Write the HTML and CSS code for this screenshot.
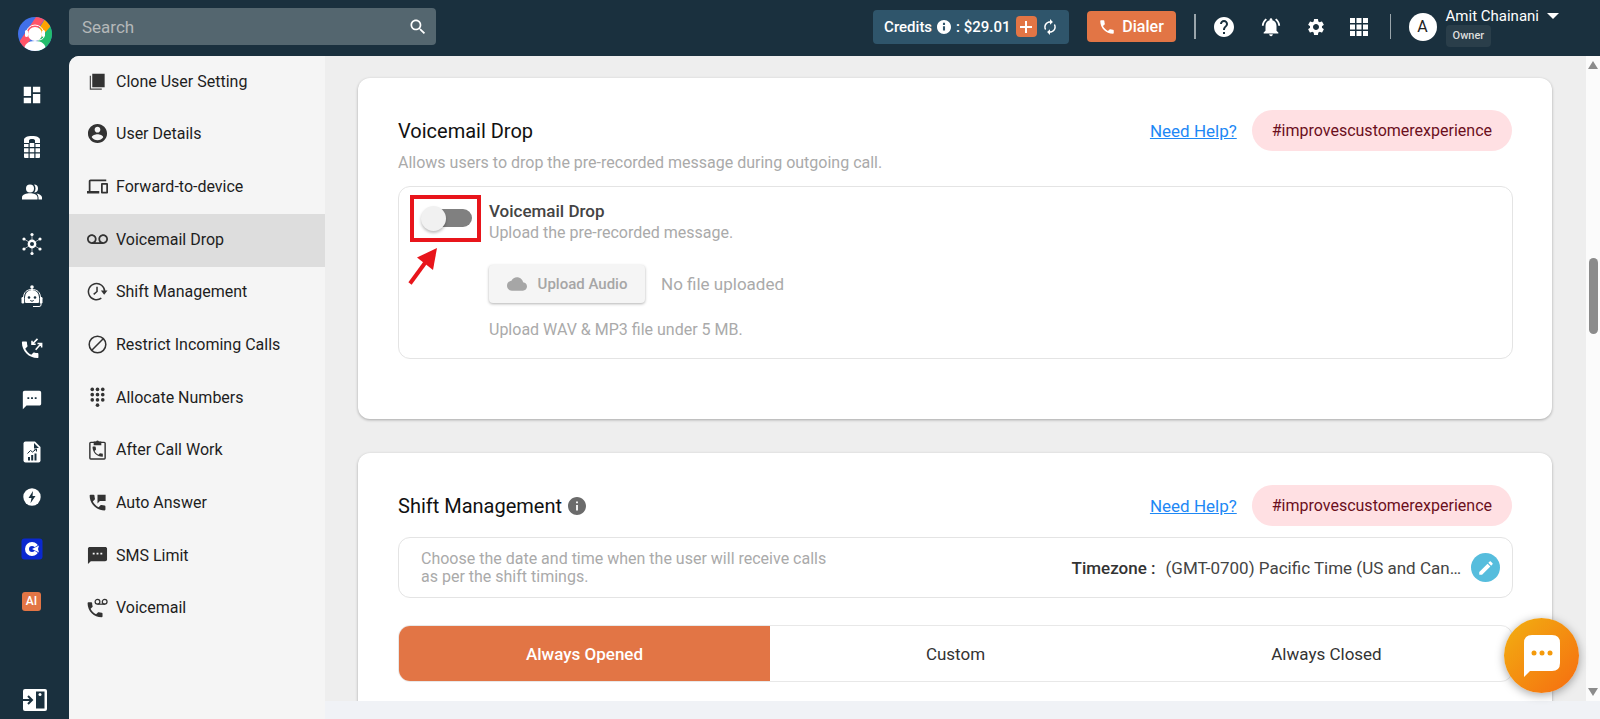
FILE: index.html
```html
<!DOCTYPE html>
<html lang="en">
<head>
  <meta charset="UTF-8">
  <meta name="viewport" content="width=device-width, initial-scale=1">
  <title>User Settings</title>
  <link rel="stylesheet" href="styles.css">
</head>
<body>
  <div class="app">
    <!-- left icon rail -->
    <nav class="rail" aria-label="Main">
      <a class="logo" href="#" aria-label="Home">
        <svg width="34" height="34" viewBox="0 0 34 34">
          <defs>
            <clipPath id="logoClip"><circle cx="17" cy="17" r="17"/></clipPath>
          </defs>
          <g clip-path="url(#logoClip)">
            <rect width="34" height="34" fill="#4170e8"/>
            <path d="M18 0h10L6 32 1 25z" fill="#ff5468"/>
            <path d="M27 2l6 7-13 15-2-8z" fill="#ffa400"/>
            <path d="M34 8v26H20l-1-9z" fill="#22bd6c"/>
            <path d="M8 17a9 9 0 0 1 18 0" fill="none" stroke="#fff" stroke-width="1"/>
            <circle cx="17" cy="17" r="7" fill="#fff"/>
            <rect x="7" y="13" width="3" height="7" rx="1.500" fill="#fff"/>
            <rect x="24" y="13" width="3" height="7" rx="1.500" fill="#fff"/>
            <path d="M6 34c0-7 4-10 11-10s11 3 11 10z" fill="#fff"/>
            <path d="M26 20c-1 2-3 3-6 3" fill="none" stroke="#fff" stroke-width="1"/>
          </g>
        </svg>
      </a>
      <ul class="rail-list">
        <li><a href="#" aria-label="Dashboard">
          <svg width="22" height="22" viewBox="0 0 24 24"><path d="M3 13h8V3H3v10zm0 8h8v-6H3v6zm10 0h8V11h-8v10zm0-18v6h8V3h-8z"/></svg>
        </a></li>
        <li><a href="#" aria-label="Calls">
          <svg width="18" height="22" viewBox="0 0 18 22"><path d="M1 7V4c0-2.500 3-4 8-4s8 1.500 8 4v3h-5V4.500c0-.8-1-1.500-3-1.500s-3 .7-3 1.500V7z"/><path d="M1 8h4.500v3H1zM6.700 7h4.600v4H6.700zM12.500 8H17v3h-4.500zM1 12.200h4.500v4H1zM6.700 12.200h4.600v4H6.700zM12.500 12.200H17v4h-4.500zM1 17.400h4.500V22H2q-1 0-1-1zM6.700 17.400h4.600V22H6.700zM12.500 17.400H17V21q0 1-1 1h-3.500z"/></svg>
        </a></li>
        <li class="tight"><a href="#" aria-label="Contacts">
          <svg width="20" height="16" viewBox="0 0 20 16"><path d="M12 0.500a4 4 0 1 1 0 8q1.500-1.500 1.500-4t-1.500-4zM14.500 9.500q5 1 5.500 3.700V15.500h-3.500v-2q-.2-2.500-2-4z"/><circle cx="8" cy="4.500" r="4"/><path d="M0 15.500v-2.300C0 10.500 4.500 9.200 8 9.200s7.500 1.300 7.500 4.300v2z"/></svg>
        </a></li>
        <li><a href="#" aria-label="Integrations">
          <svg width="22" height="24" viewBox="0 0 22 24"><circle cx="11" cy="12" r="3.200" fill="none" stroke="#fff" stroke-width="2.400"/><path d="M11 3v6M11 15v6M3 7l5 3M14 14l5 3M19 7l-5 3M8 14l-5 3" stroke="#fff" stroke-width="0.600"/><circle cx="11" cy="2.500" r="1.600"/><circle cx="11" cy="21.500" r="1.600"/><circle cx="3" cy="7" r="1.600"/><circle cx="19" cy="7" r="1.600"/><circle cx="3" cy="17" r="1.600"/><circle cx="19" cy="17" r="1.600"/></svg>
        </a></li>
        <li><a href="#" aria-label="Bot">
          <svg width="22" height="24" viewBox="0 0 22 24"><circle cx="11" cy="3" r="1.800"/><path d="M10.500 4h1v3h-1z"/><path d="M4 18v-5a7 7 0 0 1 14 0v5q0 1-1 1H5q-1 0-1-1z"/><path d="M2.500 14C2.500 8 6 5.500 11 5.500s8.500 2.500 8.500 8.500" fill="none" stroke="#fff" stroke-width="1"/><rect x="0.500" y="13" width="2.700" height="6.500" rx="1.200"/><rect x="18.800" y="13" width="2.700" height="6.500" rx="1.200"/><path d="M20 19v2q0 1.500-2 1.500h-6" fill="none" stroke="#fff" stroke-width="1"/><circle cx="8" cy="13.500" r="1.300" class="cut"/><circle cx="14" cy="13.500" r="1.300" class="cut"/><path d="M9.300 16.500q1.700 1.500 3.400 0" fill="none" class="cut-line"/></svg>
        </a></li>
        <li><a href="#" aria-label="Call routing">
          <svg width="22" height="22" viewBox="0 0 24 24"><path transform="translate(-2 2)" d="M6.620 10.790c1.440 2.830 3.760 5.140 6.590 6.590l2.200-2.200c.27-.27.67-.36 1.020-.24 1.120.37 2.330.57 3.570.57.55 0 1 .45 1 1V20c0 .55-.45 1-1 1-9.390 0-17-7.610-17-17 0-.55.45-1 1-1h3.500c.55 0 1 .45 1 1 0 1.250.2 2.450.57 3.570.11.35.03.74-.25 1.020z"/><path d="M18 2l-6 6M12 4v4h4M16 14l6-7M18 7h4.500v4.500" fill="none" stroke="#fff" stroke-width="1.700"/></svg>
        </a></li>
        <li><a href="#" aria-label="Messages">
          <svg width="22" height="22" viewBox="0 0 24 24"><path d="M20 2H4c-1.100 0-1.990.9-1.990 2L2 22l4-4h14c1.100 0 2-.9 2-2V4c0-1.100-.9-2-2-2zM9 11H7V9h2v2zm4 0h-2V9h2v2zm4 0h-2V9h2v2z"/></svg>
        </a></li>
        <li><a href="#" aria-label="Reports">
          <svg width="18" height="22" viewBox="0 0 18 22"><path d="M2.500 0.500H12L17.500 6v13.500q0 2-2 2h-13q-2 0-2-2v-17q0-2 2-2z"/><path class="cut" d="M11 2l5 5h-5zM5 16h2v3.500H5zM8.200 14h2v5.500h-2zM11.500 12.500h2v7h-2z"/><path d="M4.500 12.500l3-3 2 1.500 4-3M11 8h2.500v2.500" fill="none" class="cut-line"/></svg>
        </a></li>
        <li class="tight"><a href="#" aria-label="Power">
          <svg width="18" height="18" viewBox="0 0 18 18"><circle cx="9" cy="9" r="8.700"/><path class="cut" d="M10 3L5.500 10h3L7.500 15.200 12.500 8H9.500z"/></svg>
        </a></li>
        <li><a href="#" aria-label="Campaigns">
          <svg width="22" height="22" viewBox="0 0 22 22"><rect x="0.500" y="0.500" width="21" height="21" rx="3" fill="#0a28d0"/><circle cx="11" cy="11" r="5" fill="none" stroke="#fff" stroke-width="4"/><path d="M11 11l9-6v12z" fill="#0a28d0"/><path d="M11 11l7-3.500-1 3.500 1 3.500z" fill="#fff"/></svg>
        </a></li>
        <li><a class="ai" href="#">AI</a></li>
      </ul>
      <button class="rail-toggle" aria-label="Expand menu">
        <svg width="24" height="22" viewBox="0 0 24 22"><rect width="24" height="22" rx="2" fill="#fff"/><path d="M0 11h8M5 7l4 4-4 4" fill="none" class="cut-line wide"/><rect class="cut" x="13" y="2.500" width="8.500" height="17"/><circle cx="17" cy="5.500" r="1.500" fill="#fff"/></svg>
      </button>
    </nav>

    <div class="main">
      <header class="topbar">
        <form class="search">
          <input type="text" placeholder="Search" aria-label="Search">
          <button type="button" aria-label="Search">
            <svg width="20" height="20" viewBox="0 0 24 24"><path d="M15.500 14h-.79l-.28-.27C15.410 12.590 16 11.110 16 9.500 16 5.910 13.090 3 9.500 3S3 5.910 3 9.500 5.910 16 9.500 16c1.610 0 3.090-.59 4.230-1.570l.27.28v.79l5 4.990L20.490 19l-4.990-5zm-6 0C7.010 14 5 11.990 5 9.500S7.010 5 9.500 5 14 7.010 14 9.500 11.990 14 9.500 14z"/></svg>
          </button>
        </form>

        <div class="credits">
          <span>Credits</span>
          <svg width="14" height="14" viewBox="2 2 20 20"><path d="M12 2C6.480 2 2 6.480 2 12s4.480 10 10 10 10-4.480 10-10S17.520 2 12 2zm1.500 15h-3v-6h3v6zm0-8h-3V6h3v3z"/></svg>
          <span>: $29.01</span>
          <button class="add" aria-label="Add credits">
            <svg width="14" height="14" viewBox="0 0 14 14"><path d="M7 1v12M1 7h12" stroke="#fff" stroke-width="2"/></svg>
          </button>
          <button class="refresh" aria-label="Refresh credits">
            <svg width="16" height="16" viewBox="2 1 20 22"><path d="M12 6v3l4-4-4-4v3c-4.420 0-8 3.580-8 8 0 1.570.46 3.030 1.240 4.260L6.700 14.800c-.45-.83-.7-1.790-.7-2.800 0-3.310 2.690-6 6-6zm6.760 1.740L17.300 9.200c.44.84.7 1.790.7 2.800 0 3.310-2.690 6-6 6v-3l-4 4 4 4v-3c4.420 0 8-3.580 8-8 0-1.570-.46-3.030-1.240-4.260z"/></svg>
          </button>
        </div>
        <button class="dialer">
          <svg width="18" height="18" viewBox="0 0 24 24"><path d="M6.620 10.790c1.440 2.830 3.760 5.140 6.590 6.590l2.200-2.200c.27-.27.67-.36 1.020-.24 1.120.37 2.330.57 3.570.57.55 0 1 .45 1 1V20c0 .55-.45 1-1 1-9.390 0-17-7.610-17-17 0-.55.45-1 1-1h3.500c.55 0 1 .45 1 1 0 1.250.2 2.450.57 3.570.11.35.03.74-.25 1.020z"/></svg>
          Dialer
        </button>

        <div class="tools">
          <button aria-label="Help">
            <svg width="24" height="24" viewBox="0 0 24 24"><path d="M12 2C6.480 2 2 6.480 2 12s4.480 10 10 10 10-4.480 10-10S17.520 2 12 2zm1 17h-2v-2h2v2zm2.070-7.750l-.9.920C13.450 12.900 13 13.500 13 15h-2v-.5c0-1.100.45-2.100 1.170-2.830l1.240-1.260c.37-.36.59-.86.59-1.410 0-1.100-.9-2-2-2s-2 .9-2 2H8c0-2.210 1.790-4 4-4s4 1.790 4 4c0 .88-.36 1.680-.93 2.250z"/></svg>
          </button>
          <button aria-label="Notifications">
            <svg width="22" height="22" viewBox="0 0 24 24"><path d="M7.580 4.080L6.150 2.650C3.750 4.480 2.170 7.300 2.030 10.500h2c.15-2.650 1.510-4.970 3.550-6.420zm12.390 6.420h2c-.15-3.200-1.730-6.020-4.120-7.850l-1.420 1.430c2.020 1.450 3.390 3.770 3.540 6.420zM18 11c0-3.070-1.640-5.640-4.500-6.320V4c0-.83-.67-1.500-1.500-1.500s-1.500.67-1.500 1.500v.68C7.630 5.360 6 7.920 6 11v5l-2 2v1h16v-1l-2-2v-5zm-6 11c.14 0 .27-.01.4-.04.65-.14 1.180-.58 1.440-1.180.1-.24.15-.5.15-.78h-4c.01 1.100.9 2 2.010 2z"/></svg>
          </button>
          <button aria-label="Settings">
            <svg width="20" height="20" viewBox="0 0 24 24"><path d="M19.140 12.940c.04-.3.06-.61.06-.94 0-.32-.02-.64-.07-.94l2.030-1.580c.18-.14.23-.41.12-.61l-1.920-3.320c-.12-.22-.37-.29-.59-.22l-2.390.96c-.5-.38-1.030-.7-1.620-.94l-.36-2.540c-.04-.24-.24-.41-.48-.41h-3.840c-.24 0-.43.17-.47.41l-.36 2.540c-.59.24-1.130.57-1.620.94l-2.390-.96c-.22-.08-.47 0-.59.22L2.740 8.870c-.12.21-.08.47.12.61l2.030 1.580c-.05.3-.09.63-.09.94s.02.64.07.94l-2.030 1.580c-.18.14-.23.41-.12.61l1.920 3.320c.12.22.37.29.59.22l2.390-.96c.5.38 1.030.7 1.620.94l.36 2.540c.05.24.24.41.48.41h3.840c.24 0 .44-.17.47-.41l.36-2.540c.59-.24 1.130-.56 1.620-.94l2.390.96c.22.08.47 0 .59-.22l1.920-3.320c.12-.22.07-.47-.12-.61l-2.010-1.580zM12 15.600c-1.980 0-3.600-1.620-3.600-3.600s1.620-3.600 3.600-3.600 3.600 1.620 3.600 3.600-1.620 3.600-3.600 3.600z"/></svg>
          </button>
          <button aria-label="Apps">
            <svg width="18" height="18" viewBox="0 0 18 18"><path d="M0 0h5v5H0zM6.500 0h5v5h-5zM13 0h5v5h-5zM0 6.500h5v5H0zM6.500 6.500h5v5h-5zM13 6.500h5v5h-5zM0 13h5v5H0zM6.500 13h5v5h-5zM13 13h5v5h-5z"/></svg>
          </button>
        </div>

        <div class="account">
          <span class="avatar">A</span>
          <div class="who">
            <button class="name">Amit Chainani
              <svg width="12" height="6" viewBox="0 0 12 6"><path d="M0 0h12L6 6z"/></svg>
            </button>
            <span class="role">Owner</span>
          </div>
        </div>
      </header>

      <div class="workspace">
        <aside class="menu">
          <a href="#">
            <svg viewBox="0 0 22 22"><path d="M5.500 3h13v14h-13z"/><path d="M3.500 5v14h12" fill="none" stroke="#444" stroke-width="1.200"/></svg>
            Clone User Setting</a>
          <a href="#">
            <svg viewBox="1 1 22 22"><path d="M12 2C6.480 2 2 6.480 2 12s4.480 10 10 10 10-4.480 10-10S17.520 2 12 2zm0 3c1.660 0 3 1.340 3 3s-1.340 3-3 3-3-1.340-3-3 1.340-3 3-3zm0 14.200c-2.500 0-4.710-1.280-6-3.220.03-1.990 4-3.080 6-3.080 1.990 0 5.970 1.090 6 3.080-1.290 1.940-3.500 3.220-6 3.220z"/></svg>
            User Details</a>
          <a href="#">
            <svg viewBox="0 0 24 24"><path d="M4 6h18V4H4c-1.100 0-2 .9-2 2v11H0v3h14v-3H4V6zm19 2h-6c-.55 0-1 .45-1 1v10c0 .55.45 1 1 1h6c.55 0 1-.45 1-1V9c0-.55-.45-1-1-1zm-1 10h-4v-8h4v8z"/></svg>
            Forward-to-device</a>
          <a class="active" href="#">
            <svg viewBox="0 0 24 24"><path d="M18.500 6C15.460 6 13 8.460 13 11.500c0 1.330.47 2.550 1.260 3.500H9.740c.79-.95 1.260-2.170 1.260-3.500C11 8.460 8.540 6 5.500 6S0 8.460 0 11.500 2.460 17 5.500 17h13c3.040 0 5.500-2.460 5.500-5.500S21.540 6 18.500 6zm-13 9C3.570 15 2 13.430 2 11.500S3.570 8 5.500 8 9 9.570 9 11.500 7.430 15 5.500 15zm13 0c-1.930 0-3.500-1.570-3.500-3.500S16.570 8 18.500 8 22 9.570 22 11.500 20.430 15 18.500 15z"/></svg>
            Voicemail Drop</a>
          <a href="#">
            <svg viewBox="0 0 22 22"><path d="M18.500 11a8.500 8.500 0 1 0-3.500 7M10.500 6v5L7 14" fill="none" stroke="#333" stroke-width="1.600"/><path d="M14.500 10h7L18 14.500z"/></svg>
            Shift Management</a>
          <a href="#">
            <svg viewBox="0 0 22 22"><circle cx="11" cy="11" r="8.700" fill="none" stroke="#333" stroke-width="1.600"/><path d="M17 5L5 17" stroke="#333" stroke-width="1.600"/></svg>
            Restrict Incoming Calls</a>
          <a href="#">
            <svg viewBox="0 0 22 22"><circle cx="5.500" cy="2.500" r="1.900"/><circle cx="11" cy="2.500" r="1.900"/><circle cx="16.500" cy="2.500" r="1.900"/><circle cx="5.500" cy="8" r="1.900"/><circle cx="11" cy="8" r="1.900"/><circle cx="16.500" cy="8" r="1.900"/><circle cx="5.500" cy="13.500" r="1.900"/><circle cx="11" cy="13.500" r="1.900"/><circle cx="16.500" cy="13.500" r="1.900"/><circle cx="11" cy="19" r="1.900"/></svg>
            Allocate Numbers</a>
          <a href="#">
            <svg viewBox="0 0 22 22"><rect x="3" y="3.500" width="16" height="17.500" rx="1" fill="none" stroke="#333" stroke-width="1.500"/><path d="M7 2.500h2.500a1.700 1.700 0 0 1 3 0H15v4H7z"/><g transform="translate(4 6) scale(0.600)"><path d="M6.620 10.790c1.440 2.830 3.760 5.140 6.590 6.590l2.200-2.200c.27-.27.67-.36 1.020-.24 1.120.37 2.330.57 3.570.57.55 0 1 .45 1 1V20c0 .55-.45 1-1 1-9.390 0-17-7.610-17-17 0-.55.45-1 1-1h3.500c.55 0 1 .45 1 1 0 1.250.2 2.450.57 3.570.11.35.03.74-.25 1.020z"/></g></svg>
            After Call Work</a>
          <a href="#">
            <svg viewBox="1 1 22 22"><path transform="translate(1 1) scale(0.920)" d="M6.620 10.790c1.440 2.830 3.760 5.140 6.590 6.590l2.200-2.200c.27-.27.67-.36 1.020-.24 1.120.37 2.330.57 3.570.57.55 0 1 .45 1 1V20c0 .55-.45 1-1 1-9.390 0-17-7.610-17-17 0-.55.45-1 1-1h3.500c.55 0 1 .45 1 1 0 1.250.2 2.450.57 3.570.11.35.03.74-.25 1.020z"/><path d="M12 4h8.500v6.500h-6L12 13z"/></svg>
            Auto Answer</a>
          <a href="#">
            <svg viewBox="1 1 22 22"><path d="M20 3H4c-1.100 0-1.990.7-1.990 1.500L2 21l3-3h15c1.100 0 2-.7 2-1.500v-12C22 3.700 21.100 3 20 3zM9 11H7V9h2v2zm4 0h-2V9h2v2zm4 0h-2V9h2v2z"/></svg>
            SMS Limit</a>
          <a href="#">
            <svg viewBox="0 0 22 22"><path transform="translate(-2 3) scale(0.870)" d="M6.620 10.790c1.440 2.830 3.760 5.140 6.590 6.590l2.200-2.200c.27-.27.67-.36 1.020-.24 1.120.37 2.330.57 3.570.57.55 0 1 .45 1 1V20c0 .55-.45 1-1 1-9.390 0-17-7.610-17-17 0-.55.45-1 1-1h3.500c.55 0 1 .45 1 1 0 1.250.2 2.450.57 3.570.11.35.03.74-.25 1.020z"/><path d="M11 7.500h8" stroke="#333" stroke-width="1.300"/><circle cx="11" cy="5" r="2.500" fill="none" stroke="#333" stroke-width="1.300"/><circle cx="18.500" cy="5" r="2.500" fill="none" stroke="#333" stroke-width="1.300"/></svg>
            Voicemail</a>
        </aside>

        <div class="page">
          <div class="scroller">
            <main class="content">
              <section class="card">
                <div class="card-head">
                  <h2>Voicemail Drop</h2>
                  <a class="help" href="#">Need Help?</a>
                  <span class="tag">#improvescustomerexperience</span>
                </div>
                <p class="note">Allows users to drop the pre-recorded message during outgoing call.</p>
                <div class="box drop-box">
                  <div class="switch-col">
                    <label class="switch">
                      <input type="checkbox" aria-label="Enable Voicemail Drop">
                      <span class="track"></span>
                    </label>
                    <svg class="arrow" width="30" height="38" viewBox="0 0 30 38"><path d="M2 36.500L17 16" stroke="#e8151b" stroke-width="4"/><path d="M29 1L9 10.500 25 23z" fill="#e8151b"/></svg>
                  </div>
                  <div class="drop-info">
                    <h3>Voicemail Drop</h3>
                    <p>Upload the pre-recorded message.</p>
                    <div class="upload">
                      <button disabled>
                        <svg width="20" height="20" viewBox="0 0 24 24"><path d="M19.350 10.040C18.670 6.590 15.640 4 12 4 9.110 4 6.600 5.640 5.350 8.040 2.340 8.360 0 10.910 0 14c0 3.310 2.690 6 6 6h13c2.760 0 5-2.240 5-5 0-2.640-2.050-4.780-4.650-4.960z"/></svg>
                        Upload Audio
                      </button>
                      <span>No file uploaded</span>
                    </div>
                    <p>Upload WAV &amp; MP3 file under 5 MB.</p>
                  </div>
                </div>
              </section>

              <section class="card">
                <div class="card-head">
                  <h2>Shift Management
                    <svg width="18" height="18" viewBox="2 2 20 20"><path d="M12 2C6.480 2 2 6.480 2 12s4.480 10 10 10 10-4.480 10-10S17.520 2 12 2zm1 15h-2v-6h2v6zm0-8h-2V7h2v2z"/></svg>
                  </h2>
                  <a class="help" href="#">Need Help?</a>
                  <span class="tag">#improvescustomerexperience</span>
                </div>
                <div class="box zone-box">
                  <p>Choose the date and time when the user will receive calls<br>as per the shift timings.</p>
                  <b>Timezone :</b>
                  <span>(GMT-0700) Pacific Time (US and Can…</span>
                  <button class="edit" aria-label="Edit timezone">
                    <svg width="18" height="18" viewBox="0 0 24 24"><path d="M3 17.250V21h3.750L17.810 9.940l-3.750-3.750L3 17.250zM20.710 7.040c.39-.39.39-1.020 0-1.410l-2.340-2.340c-.39-.39-1.020-.39-1.410 0l-1.830 1.830 3.750 3.750 1.830-1.830z"/></svg>
                  </button>
                </div>
                <div class="tabs">
                  <button class="on">Always Opened</button>
                  <button>Custom</button>
                  <button>Always Closed</button>
                </div>
              </section>
            </main>
            <div class="scrollbar" aria-hidden="true">
              <svg width="10" height="8" viewBox="0 0 10 8"><path d="M5 0l5 8H0z"/></svg>
              <div class="thumb"></div>
              <svg width="10" height="8" viewBox="0 0 10 8"><path d="M0 0h10L5 8z"/></svg>
            </div>
          </div>
          <div class="footer"></div>
        </div>
      </div>
    </div>
  </div>

  <button class="chat" aria-label="Open chat">
    <svg width="36" height="42" viewBox="0 0 36 42"><path d="M8 0h20q8 0 8 8v20q0 8-8 8H6l-6 6V8q0-8 8-8z" fill="#fff"/><circle cx="10" cy="18" r="2.500" fill="#f49a0b"/><circle cx="18" cy="18" r="2.500" fill="#f49a0b"/><circle cx="26" cy="18" r="2.500" fill="#f49a0b"/></svg>
  </button>
</body>
</html>
```
FILE: styles.css
```css
* {
  box-sizing: border-box;
}

body {
  margin: 0;
  font-family: Roboto, sans-serif;
  font-size: 16px;
  color: #222;
  background: #1a303e;
}

h2, h3, p, ul {
  margin: 0;
  padding: 0;
  font-weight: normal;
}

button {
  font-family: inherit;
  border: none;
  background: none;
  padding: 0;
  color: inherit;
  cursor: pointer;
}

svg {
  display: block;
  flex: none;
}

.app {
  display: flex;
  height: 100vh;
  overflow: hidden;
}

/* icon rail */
.rail {
  width: 69px;
  flex: none;
  display: flex;
  flex-direction: column;
  padding: 17px 0 8px;
  fill: #fff;
}

.logo {
  margin-left: 18px;
}

.rail-list {
  list-style: none;
  margin-top: 18px;
}

.rail-list li {
  height: 52px;
  width: 63px;
  display: flex;
  align-items: center;
  justify-content: center;
}

.rail-list .tight {
  margin-top: -7px;
}

.cut {
  fill: #1a303e;
}

.cut-line {
  stroke: #1a303e;
  stroke-width: 1;
}

.cut-line.wide {
  stroke-width: 2;
}

.ai {
  display: block;
  width: 19px;
  height: 19px;
  border-radius: 3px;
  background: #e27545;
  color: #fff;
  font-size: 12px;
  font-weight: 500;
  line-height: 19px;
  text-align: center;
  text-decoration: none;
}

.rail-toggle {
  margin: auto 0 0 23px;
  width: 24px;
}

/* top bar */
.main {
  flex: 1;
  min-width: 0;
  display: flex;
  flex-direction: column;
}

.topbar {
  height: 56px;
  flex: none;
  display: flex;
  align-items: center;
  padding: 0 41px 3px 0;
  color: #fff;
  fill: #fff;
}

.search {
  display: flex;
  align-items: center;
  width: 367px;
  height: 37px;
  margin-right: auto;
  padding: 0 8px 0 12px;
  border-radius: 4px;
  background: #54666f;
}

.search input {
  flex: 1;
  min-width: 0;
  padding: 0 1px;
  border: none;
  outline: none;
  background: none;
  color: #fff;
  font-family: inherit;
  font-size: 17px;
}

.search input::placeholder {
  color: #b4b8b9;
}

.credits {
  display: flex;
  align-items: center;
  gap: 5px;
  height: 34px;
  padding: 0 11px;
  margin-right: 18px;
  border-radius: 4px;
  background: #2f556b;
  font-size: 15px;
  font-weight: 500;
}

.add {
  display: flex;
  align-items: center;
  justify-content: center;
  width: 21px;
  height: 21px;
  border-radius: 4px;
  background: #e27545;
}

.dialer {
  display: flex;
  align-items: center;
  justify-content: center;
  gap: 6px;
  width: 89px;
  height: 31px;
  border-radius: 4px;
  background: #e27545;
  font-size: 16px;
  font-weight: 500;
}

.tools {
  display: flex;
  align-items: center;
  gap: 24px;
  height: 25px;
  margin-left: 18px;
  padding: 0 22px 0 16px;
  border-left: 2px solid #9aa5ab;
  border-right: 1px solid #9aa5ab;
}

.account {
  display: flex;
  align-items: center;
  gap: 9px;
  padding-left: 18px;
}

.avatar {
  width: 28px;
  height: 28px;
  border-radius: 50%;
  background: #fff;
  color: #222;
  line-height: 28px;
  text-align: center;
}

.who {
  display: flex;
  flex-direction: column;
  align-items: flex-start;
}

.name {
  display: flex;
  align-items: center;
  gap: 8px;
  height: 18px;
  font-size: 15px;
}

.role {
  padding: 0 7px;
  border-radius: 4px;
  background: #2a3e4a;
  color: #ddd;
  font-size: 11px;
  font-weight: 500;
  line-height: 22px;
}

/* settings menu */
.workspace {
  flex: 1;
  min-height: 0;
  display: flex;
  border-top-left-radius: 10px;
  overflow: hidden;
  background: #eee;
}

.menu {
  width: 256px;
  flex: none;
  display: grid;
  grid-auto-rows: 1fr;
  padding-bottom: 84px;
  background: #f5f5f5;
}

.menu a {
  display: flex;
  align-items: center;
  gap: 8px;
  padding: 0 0 2px 18px;
  color: #1e1e1e;
  text-decoration: none;
}

.menu svg {
  width: 21px;
  height: 21px;
  fill: #333;
}

.menu .active {
  background: #ddd;
}

/* page */
.page {
  flex: 1;
  min-width: 0;
  display: flex;
  flex-direction: column;
}

.scroller {
  flex: 1;
  min-height: 0;
  display: flex;
  overflow: hidden;
}

.content {
  flex: 1;
  min-width: 0;
  padding: 22px 34px 22px 33px;
}

.footer {
  height: 18px;
  background: #f0f2f6;
}

.scrollbar {
  width: 14px;
  display: flex;
  flex-direction: column;
  align-items: center;
  justify-content: space-between;
  padding: 5px 0;
  background: #fbfbfb;
  fill: #8b8b8b;
}

.thumb {
  width: 9px;
  height: 76px;
  margin: 189px 0 auto;
  border-radius: 5px;
  background: #8b8b8b;
}

.card {
  margin-bottom: 34px;
  padding: 32px 39px 60px 40px;
  border-radius: 12px;
  background: #fff;
  box-shadow: 0 1px 3px rgba(0, 0, 0, 0.3);
}

.card-head {
  display: flex;
  align-items: center;
  height: 41px;
  padding-right: 1px;
}

.card-head h2 {
  display: flex;
  align-items: center;
  gap: 6px;
  margin-right: auto;
  color: #111;
  font-size: 20px;
}

.card-head h2 svg {
  fill: #6b6b6b;
}

.help {
  margin-right: 15px;
  color: #1e88f5;
  font-size: 17px;
}

.tag {
  padding: 0 20px;
  border-radius: 21px;
  background: #ffe0e3;
  color: #6b0f1d;
  font-size: 16px;
  line-height: 41px;
}

.note {
  margin: 2px 0 13px;
  color: #aaa;
  font-size: 16px;
  line-height: 20px;
}

.box {
  border: 1px solid #e4e4e4;
  border-radius: 12px;
}

.drop-box {
  display: flex;
  gap: 8px;
  padding: 8px 11px 18px;
}

.switch {
  display: block;
  width: 71px;
  height: 47px;
  border: 4px solid #e8151b;
  padding: 10px 5px 0 8px;
}

.switch input {
  position: absolute;
  opacity: 0;
}

.track {
  display: flex;
  align-items: center;
  height: 18px;
  border-radius: 9px;
  margin-left: 5px;
  background: #808080;
}

.track::before {
  content: "";
  width: 25px;
  height: 25px;
  margin-left: -6px;
  border-radius: 50%;
  background: #f1f1f1;
  box-shadow: 0 2px 3px rgba(0, 0, 0, 0.25);
}

.arrow {
  margin: 5px 0 0 -2px;
}

.drop-info {
  color: #aaa;
  line-height: 21px;
  padding-top: 6px;
}

.drop-info h3 {
  color: #444;
  font-size: 17px;
  font-weight: 500;
}

.drop-info p {
  font-size: 16px;
}

.upload {
  display: flex;
  align-items: center;
  gap: 16px;
  margin: 22px 0 16px;
  font-size: 17px;
}

.upload button {
  display: flex;
  align-items: center;
  justify-content: center;
  gap: 11px;
  width: 156px;
  height: 38px;
  border-radius: 4px;
  background: #f5f5f5;
  color: #a6a6a6;
  fill: #a6a6a6;
  font-size: 15px;
  font-weight: 500;
  box-shadow: 0 1px 3px rgba(0, 0, 0, 0.3);
}

.zone-box {
  display: flex;
  align-items: center;
  gap: 10px;
  height: 61px;
  margin-top: 11px;
  padding: 0 12px 0 22px;
  color: #444;
  font-size: 17px;
}

.zone-box p {
  margin-right: auto;
  color: #aaa;
  font-size: 16px;
  line-height: 18px;
}

.zone-box b {
  color: #333;
  font-weight: 500;
}

.edit {
  display: flex;
  align-items: center;
  justify-content: center;
  width: 29px;
  height: 29px;
  border-radius: 50%;
  background: #56bddd;
  fill: #fff;
}

.tabs {
  display: grid;
  grid-template-columns: repeat(3, 1fr);
  margin-top: 27px;
  border: 1px solid #e8e8e8;
  border-radius: 12px;
  overflow: hidden;
}

.tabs button {
  height: 55px;
  color: #333;
  font-size: 17px;
}

.tabs .on {
  background: #e27545;
  color: #fff;
  font-weight: 500;
}

/* floating chat button */
.chat {
  position: fixed;
  right: 21px;
  bottom: 26px;
  display: flex;
  align-items: center;
  justify-content: center;
  width: 75px;
  height: 75px;
  border-radius: 50%;
  background: linear-gradient(135deg, #f2b011, #f66c10);
  box-shadow: 0 2px 10px rgba(0, 0, 0, 0.35);
}
```
